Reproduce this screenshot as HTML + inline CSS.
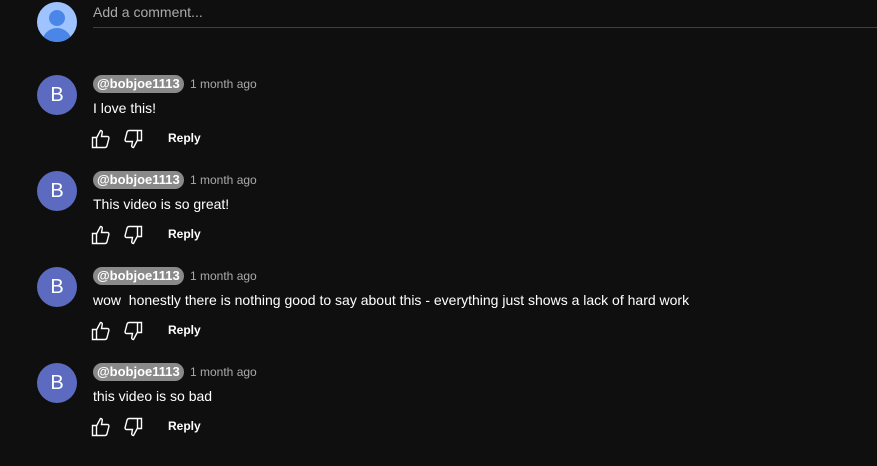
<!DOCTYPE html>
<html><head><style>
body{margin:0;background:#0f0f0f;width:877px;height:466px;overflow:hidden;font-family:"Liberation Sans",Arial,sans-serif;color:#f1f1f1;position:relative}
.top{position:absolute;left:37px;top:2px;width:40px;height:40px;border-radius:50%;background:#9fc3ff;overflow:hidden}
.line{position:absolute;left:93px;top:27px;right:0;height:1px;background:#3f3f3f}
.ph{position:absolute;left:93px;top:4px;font-size:14px;color:#aaa}
.c{position:absolute;left:0;width:877px;height:96px}
.av{position:absolute;left:37px;top:0;width:40px;height:40px;border-radius:50%;background:#5c6bc0;color:#fff;font-size:20px;line-height:40px;text-align:center}
.pill{position:absolute;left:93px;top:0;height:18px;padding:0 4px;border-radius:9px;background:#8a8a8a;color:#fff;font-weight:bold;font-size:13px;line-height:18px}
.time{position:absolute;left:190px;top:2px;font-size:12px;color:#aaa}
.txt{position:absolute;left:93px;top:25px;font-size:14px;color:#fff}
.ic{position:absolute;top:54px}
.rep{position:absolute;left:168px;top:56px;font-size:12px;font-weight:bold;color:#fff}
</style></head><body>
<div class="top"><div style="position:absolute;left:12px;top:8px;width:16px;height:16px;border-radius:50%;background:#4a86e8"></div><div style="position:absolute;left:5px;top:26px;width:30px;height:20px;border-radius:15px 15px 0 0;background:#4a86e8"></div></div>
<div class="ph">Add a comment...</div><div class="line"></div>

<div class="c" style="top:75px"><div class="av">B</div><div class="pill">@bobjoe1113</div><div class="time">1 month ago</div><div class="txt">I love this!</div>
<svg class="ic" style="left:91px" width="20" height="20" viewBox="0 0 20 20" fill="none" stroke="#fff" stroke-width="1.4"><path d="M1.5 8.5h4v10h-4zM5.5 9l4-7.5c1.5 0 2 1 1.7 2.3L10.5 7.5h6c1 0 1.7 1 1.4 2l-2 7.5c-.3.9-1 1.5-2 1.5H5.5"/></svg>
<svg class="ic" style="left:123px" width="20" height="20" viewBox="0 0 20 20" fill="none" stroke="#fff" stroke-width="1.4"><path d="M18.5 11.5h-4v-10h4zM14.5 11l-4 7.5c-1.5 0-2-1-1.7-2.3l.7-3.7h-6c-1 0-1.7-1-1.4-2l2-7.5c.3-.9 1-1.5 2-1.5h8.4"/></svg>
<div class="rep">Reply</div></div>

<div class="c" style="top:171px"><div class="av">B</div><div class="pill">@bobjoe1113</div><div class="time">1 month ago</div><div class="txt">This video is so great!</div>
<svg class="ic" style="left:91px" width="20" height="20" viewBox="0 0 20 20" fill="none" stroke="#fff" stroke-width="1.4"><path d="M1.5 8.5h4v10h-4zM5.5 9l4-7.5c1.5 0 2 1 1.7 2.3L10.5 7.5h6c1 0 1.7 1 1.4 2l-2 7.5c-.3.9-1 1.5-2 1.5H5.5"/></svg>
<svg class="ic" style="left:123px" width="20" height="20" viewBox="0 0 20 20" fill="none" stroke="#fff" stroke-width="1.4"><path d="M18.5 11.5h-4v-10h4zM14.5 11l-4 7.5c-1.5 0-2-1-1.7-2.3l.7-3.7h-6c-1 0-1.7-1-1.4-2l2-7.5c.3-.9 1-1.5 2-1.5h8.4"/></svg>
<div class="rep">Reply</div></div>

<div class="c" style="top:267px"><div class="av">B</div><div class="pill">@bobjoe1113</div><div class="time">1 month ago</div><div class="txt">wow &nbsp;honestly there is nothing good to say about this - everything just shows a lack of hard work</div>
<svg class="ic" style="left:91px" width="20" height="20" viewBox="0 0 20 20" fill="none" stroke="#fff" stroke-width="1.4"><path d="M1.5 8.5h4v10h-4zM5.5 9l4-7.5c1.5 0 2 1 1.7 2.3L10.5 7.5h6c1 0 1.7 1 1.4 2l-2 7.5c-.3.9-1 1.5-2 1.5H5.5"/></svg>
<svg class="ic" style="left:123px" width="20" height="20" viewBox="0 0 20 20" fill="none" stroke="#fff" stroke-width="1.4"><path d="M18.5 11.5h-4v-10h4zM14.5 11l-4 7.5c-1.5 0-2-1-1.7-2.3l.7-3.7h-6c-1 0-1.7-1-1.4-2l2-7.5c.3-.9 1-1.5 2-1.5h8.4"/></svg>
<div class="rep">Reply</div></div>

<div class="c" style="top:363px"><div class="av">B</div><div class="pill">@bobjoe1113</div><div class="time">1 month ago</div><div class="txt">this video is so bad</div>
<svg class="ic" style="left:91px" width="20" height="20" viewBox="0 0 20 20" fill="none" stroke="#fff" stroke-width="1.4"><path d="M1.5 8.5h4v10h-4zM5.5 9l4-7.5c1.5 0 2 1 1.7 2.3L10.5 7.5h6c1 0 1.7 1 1.4 2l-2 7.5c-.3.9-1 1.5-2 1.5H5.5"/></svg>
<svg class="ic" style="left:123px" width="20" height="20" viewBox="0 0 20 20" fill="none" stroke="#fff" stroke-width="1.4"><path d="M18.5 11.5h-4v-10h4zM14.5 11l-4 7.5c-1.5 0-2-1-1.7-2.3l.7-3.7h-6c-1 0-1.7-1-1.4-2l2-7.5c.3-.9 1-1.5 2-1.5h8.4"/></svg>
<div class="rep">Reply</div></div>
</body></html>
